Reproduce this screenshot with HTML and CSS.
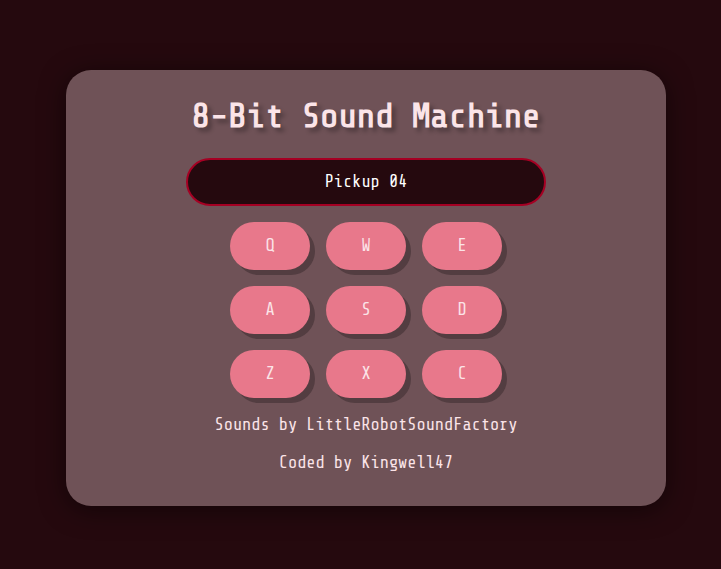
FILE: index.html
```html
<!DOCTYPE html>
<html lang="en">
<head>
<meta charset="utf-8">
<meta name="viewport" content="width=device-width, initial-scale=1">
<title>8-Bit Sound Machine</title>
<link rel="stylesheet" href="styles.css">
</head>
<body>
<main class="machine">
  <h1 class="title">8-Bit Sound Machine</h1>
  <output class="display">Pickup 04</output>
  <div class="pads">
    <button class="pad" type="button">Q</button>
    <button class="pad" type="button">W</button>
    <button class="pad" type="button">E</button>
    <button class="pad" type="button">A</button>
    <button class="pad" type="button">S</button>
    <button class="pad" type="button">D</button>
    <button class="pad" type="button">Z</button>
    <button class="pad" type="button">X</button>
    <button class="pad" type="button">C</button>
  </div>
  <p class="credit">Sounds by LittleRobotSoundFactory</p>
  <p class="credit">Coded by Kingwell47</p>
</main>
</body>
</html>
```
FILE: styles.css
```css
* {
  box-sizing: border-box;
}

body {
  margin: 0;
  min-height: 100vh;
  display: flex;
  align-items: center;
  justify-content: center;
  padding: 16px 0 10px 11px;
  background: #25090e;
  color: #fbe4e8;
  font-family: "Nova Mono", "Share Tech Mono", "Liberation Mono", monospace;
  font-size: 17px;
  line-height: 22px;
}

.machine {
  width: 100%;
  max-width: 600px;
  display: flex;
  flex-direction: column;
  align-items: center;
  gap: 16px;
  padding: 24px 0 32px;
  border-radius: 25px;
  background: #6f5257;
  box-shadow: 0 4px 26px rgba(0, 0, 0, 0.5);
}

.title {
  margin: 0 0 4px;
  font-size: 34px;
  line-height: 44px;
  text-shadow: 4px 4px 4px rgba(0, 0, 0, 0.3);
}

.display {
  width: 60%;
  min-width: 240px;
  padding: 11px 16px;
  border: 2px solid #a50023;
  border-radius: 25px;
  background: #25090e;
  color: #fff;
  text-align: center;
}

.pads {
  display: grid;
  grid-template-columns: repeat(3, 80px);
  gap: 16px;
}

.pad {
  height: 48px;
  border: 0;
  border-radius: 25px;
  background: #e8788b;
  box-shadow: 5px 5px 0 #533d41;
  color: #fbe4e8;
  font: inherit;
  cursor: pointer;
}

.credit {
  margin: 0;
}
```
